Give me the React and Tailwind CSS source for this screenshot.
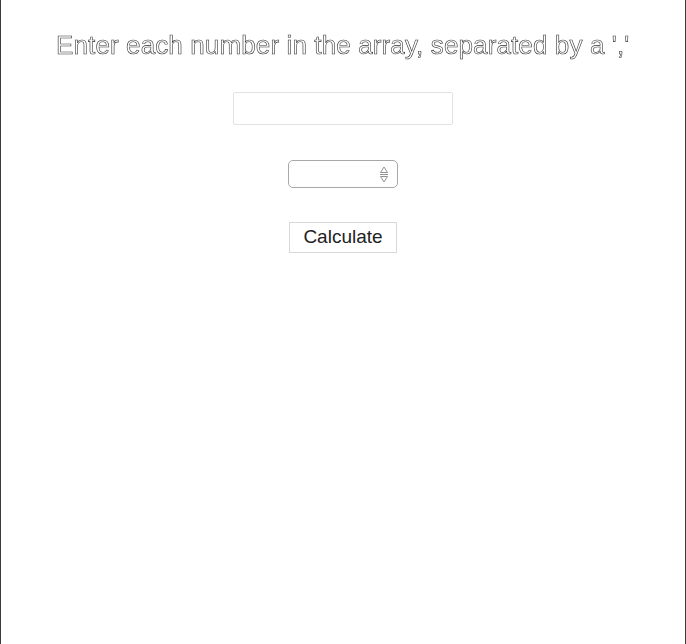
import React, { useState } from "react";

/**
 * Array input form: enter numbers, pick a count, calculate.
 */
export default function App() {
  const [values, setValues] = useState("");
  const [count, setCount] = useState("");

  return (
    <div className="min-h-[644px] bg-white border-x border-[#3b3b42] font-['Liberation_Sans',Arial,sans-serif] antialiased">
      <div className="flex flex-col items-center pt-[29px]">
        <h1 className="will-change-transform text-[26px] leading-[32px] text-white [-webkit-text-stroke:0.6px_#333] tracking-[0.12px]">
          Enter each number in the array, separated by a ','
        </h1>

        <input
          type="text"
          value={values}
          onChange={(e) => setValues(e.target.value)}
          className="mt-[31px] w-[220px] h-[33px] border border-[#e2e2e2] rounded-[2px] px-2 text-base outline-none"
        />

        <div className="mt-[35px] flex items-center w-[110px] h-[28px] border border-[#a8a8a8] rounded-[5px] pl-2 pr-[8px]">
          <input
            type="text"
            inputMode="numeric"
            value={count}
            onChange={(e) => setCount(e.target.value)}
            className="flex-1 min-w-0 h-full text-sm outline-none bg-transparent"
          />
          <svg width="10" height="18" viewBox="0 0 10 18" fill="none" stroke="#777" strokeWidth="0.8">
            <path d="M5 2 L8.5 7.5 L1.5 7.5 Z" />
            <path d="M1 9.5 L9 9.5" />
            <path d="M1.5 11.5 L8.5 11.5 L5 17 Z" />
          </svg>
        </div>

        <button
          type="button"
          className="mt-[34px] w-[108px] h-[31px] border border-[#d8d8d8] bg-white text-[19px] text-[#222]"
        >
          Calculate
        </button>
      </div>
    </div>
  );
}
